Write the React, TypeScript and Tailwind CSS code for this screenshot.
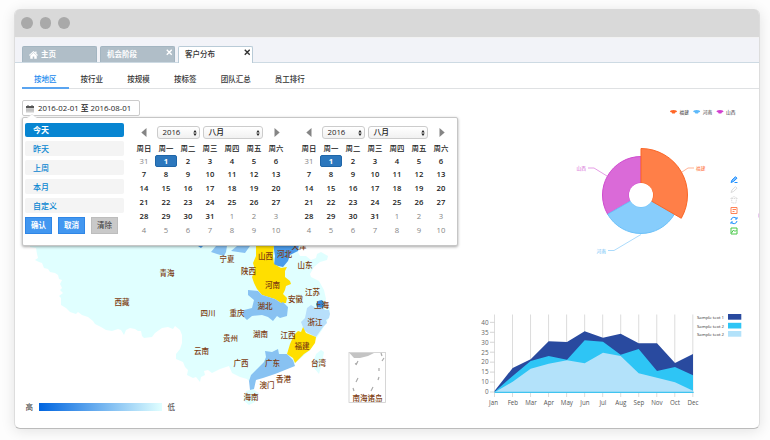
import React from "react";

const weekdays = ["周日", "周一", "周二", "周三", "周四", "周五", "周六"];
const days = [31, ...Array.from({ length: 31 }, (_, i) => i + 1), ...Array.from({ length: 10 }, (_, i) => i + 1)];

function Dots() {
  return (
    <div className="flex h-[29px] shrink-0 items-center gap-[7px] border-b border-[#f2f2f2] bg-[#d9d9d9] pl-[6px]">
      {[0, 1, 2].map((i) => (
        <span key={i} className="size-[11.6px] rounded-full bg-[#a9a9a9]" />
      ))}
    </div>
  );
}

function Cross({ color }: { color: string }) {
  return (
    <svg className="absolute right-[2px] top-[2px] size-[6.500px]" viewBox="0 0 6 6">
      <path d="M.7.7 5.3 5.3M5.3.7.7 5.3" stroke={color} strokeWidth="1.3" />
    </svg>
  );
}

function TabStrip() {
  return (
    <div className="flex h-[25px] shrink-0 items-end gap-[3px] border-b border-[#cddae3] bg-[#f2f3f8] pl-[7px] text-[7.5px] font-medium">
      <div className="flex h-[16px] w-[75px] items-center rounded-t-[2px] border border-b-0 border-[#a3b5c1] bg-[#b0bec8] pl-[6px] pt-px font-bold text-white">
        <svg className="mr-[3px] h-[8px] w-[9px]" viewBox="0 0 18 16" fill="#fff">
          <path d="M9 0 0 8l1.200 1.400L9 2.700l7.800 6.700L18 8l-3-2.700V1h-2.500v2z" />
          <path d="M9 3.400 2.500 9V15.500h5v-4.500h3v4.500h5V9z" />
        </svg>
        主页
      </div>
      <div className="relative flex h-[16px] w-[75px] items-center rounded-t-[2px] border border-b-0 border-[#a3b5c1] bg-[#b0bec8] pl-[6px] pt-px font-bold text-white">
        机会阶段
        <Cross color="#fff" />
      </div>
      <div className="relative -mb-px flex h-[17px] w-[75px] items-center rounded-t-[2px] border border-b-0 border-[#b9cbd7] bg-white pl-[6px] text-[#333]">
        客户分布
        <Cross color="#333" />
      </div>
    </div>
  );
}

function SubNav() {
  return (
    <div className="ml-[7px] flex h-[26px] shrink-0 border-b border-[#dfe1e3] text-[7.5px] font-medium leading-[32px] text-[#333]">
      <span className="h-[26px] border-b-2 border-[#5aa4f0] px-[12px] text-[#2189ee]">按地区</span>
      {["按行业", "按规模", "按标签", "团队汇总", "员工排行"].map((t) => (
        <span key={t} className="px-[12.1px]">{t}</span>
      ))}
    </div>
  );
}

function SelectBox({ label, width }: { label: string; width: string }) {
  return (
    <div className={"flex h-[12.5px] items-center justify-between rounded-[3px] border border-[#ccc] bg-gradient-to-b from-white to-[#f1f1f1] pl-[4.500px] pr-[2px] text-[7.8px] font-medium text-[#222] " + width}>
      {label}
      <svg className="h-[6px] w-[4px]" viewBox="0 0 4 6" fill="#222">
        <path d="M2 0 3.700 2.400H.3zM2 6 .3 3.600h3.400z" />
      </svg>
    </div>
  );
}

function Calendar() {
  return (
    <div className="w-[154px]">
      <div className="flex h-[14px] items-center pt-[1px]">
        <svg className="ml-[8px] mr-[10px] h-[9px] w-[6px] shrink-0" viewBox="0 0 6 9"><path d="M5.500 0v9L.3 4.500z" fill="#858585" /></svg>
        <SelectBox label="2016" width="w-[43px] shrink-0 mr-[3px]" />
        <SelectBox label="八月" width="w-[60px] shrink-0" />
        <svg className="ml-[11px] h-[9px] w-[6px] shrink-0" viewBox="0 0 6 9"><path d="M.5 0v9l5.200-4.500z" fill="#858585" /></svg>
      </div>
      <div className="grid grid-cols-7 pt-[2.500px] text-center text-[7.700px] leading-[13.8px] text-[#222]">
        {weekdays.map((w) => <span key={w} className="h-[13.2px] text-[7.4px] font-medium leading-[13px]">{w}</span>)}
        {days.map((d, i) => (
          <span
            key={i}
            className={
              i === 1
                ? "h-[12.5px] mb-[1.3px] rounded-[2px] bg-[#2c77bd] border border-[#1f66a8] font-bold leading-[11px] text-white"
                : i === 0 || i > 31
                ? "h-[13.8px] text-[#858585] font-normal"
                : "h-[13.8px] font-semibold"
            }
          >
            {d}
          </span>
        ))}
      </div>
    </div>
  );
}

function RangePopup() {
  return (
    <div className="absolute left-[7px] top-[28px] flex h-[129px] w-[436px] rounded-[2px] border border-[#c6c6c6] bg-white shadow-[0_1px_3px_rgba(0,0,0,0.35)]">
      <svg className="absolute left-[4px] top-[-4px] h-[5px] w-[10px]" viewBox="0 0 10 5">
        <path d="M0 4 5 0 10 4v1H0z" fill="#fff" />
        <path d="M0 4 5 .3 10 4" fill="none" stroke="#ddd" strokeWidth=".6" />
      </svg>
      <div className="ml-[2px] w-[99px] shrink-0 pt-[4.500px]">
        <div className="flex flex-col gap-[4.700px] text-[8px] font-medium">
          {["今天", "昨天", "上周", "本月", "自定义"].map((t, i) => (
            <div
              key={t}
              className={
                i === 0
                  ? "flex h-[14.300px] items-center rounded-[2px] bg-[#0785d1] pl-[8px] pt-[1px] font-bold text-white"
                  : "flex h-[14.300px] items-center rounded-[2px] bg-[#f4f4f4] pl-[8px] pt-[1px] text-[#0785d1]"
              }
            >
              {t}
            </div>
          ))}
        </div>
        <div className="flex gap-[6px] pt-[4.500px] text-[7.500px]">
          <span className="flex h-[16.500px] w-[27px] items-center justify-center border border-[#2f86e6] bg-[#4297f0] pt-px font-bold text-white">确认</span>
          <span className="flex h-[16.500px] w-[27px] items-center justify-center border border-[#2f86e6] bg-[#4297f0] pt-px font-bold text-white">取消</span>
          <span className="flex h-[16.500px] w-[27px] items-center justify-center border border-[#bdbdbd] bg-[#c9c9c9] pt-px text-[#333]">清除</span>
        </div>
      </div>
      <div className="flex gap-[11px] pl-[9px] pt-[7px]">
        <Calendar />
        <Calendar />
      </div>
    </div>
  );
}

const labels: [string, number, number][] = [
  ["青海", 167, 273], ["西藏", 122, 302], ["宁夏", 227, 259], ["山西", 265.500, 256], ["河北", 284.500, 254], ["天津", 299, 246],
  ["山东", 305, 265.500], ["陕西", 248.500, 271.500], ["河南", 272.500, 285], ["江苏", 312.500, 292], ["安徽", 295.500, 299.500],
  ["上海", 321.500, 305], ["湖北", 265, 306], ["四川", 208, 313.500], ["重庆", 237, 313.500], ["浙江", 315, 322], ["贵州", 230.500, 338],
  ["湖南", 260.500, 334.500], ["江西", 288, 335.500], ["云南", 201.500, 351.500], ["福建", 302, 346], ["广西", 241, 363],
  ["广东", 272.500, 363.500], ["台湾", 318.500, 363.500], ["香港", 283.500, 379], ["澳门", 267, 385], ["海南", 251, 397],
];

function ChinaMap() {
  return (
    <svg className="block h-[312px] w-[445px] shrink-0" viewBox="15 116 445 312">
      <defs>
        <linearGradient id="heat"><stop offset="0" stopColor="#0065e0" /><stop offset="1" stopColor="#e0ffff" /></linearGradient>
      </defs>
      <path fill="#e0ffff" d="M29 230 30 247 36 248 37 254 38 258 35 260 39 262 42 263 44 268 48 269 50 272 55 273 58 275 59 279 62 280 60 284 62 288 60 290 63 293 59 296 61 298 61 305 66 308 70 312 76 314 78 312 82 315 88 317 93 321 95 324 101 327 106 330 112 331 118 329 121 330 124 335 126 330 130 328 135 329 138 331 141 331 142 336 144 338 152 337 155 333 162 328 168 327 173 329 175 326 180 330 182 335 182 343 180 349 176 354 176 359 183 362 185 367 188 370 187 375 193 378 196 377 200 382 201 377 205 375 204 371 208 370 212 373 220 369 229 366 232 373 240 377 247 379 250 382 257 379 270 373 280 370 293 365 300 359 310 350 316 339 322 330 329 318 330 307 323 305 326 299 324 290 319 281 311 277 310 274 314 267 320 262 327 260 328 256 321 252 317 254 316 258 311 260 306 256 300 256 298 252 302 248V230z" />
      <path fill="#e0ffff" d="M321 350 324 352 322 363 319 374 314 368 314 360 316 354zM246 391 253 389 259 393 255 402 249 405 243 400z" />
      <path fill="#88c2f2" d="M211 252 216 246 227 246 226 252 224 256 217 254zM231 251 237 246 250 246 245 253 238 252z" />
      <path fill="#4a9bea" d="M198 246 203 246 201 248zM273 244 299 244 298 251 290 255 288 261 283 267 274 265 275 256z" />
      <path fill="#ffdf00" d="M256 244 274 244 273 256 274 264 281 268 287 267 285 271 285 277 290 281 291 284 286 286 285 290 283 294 287 298 286 303 281 303 275 299 262 295 257 289 254 283 252 277 255 270 253 263 256 256z" />
      <path fill="#88c2f2" d="M248 290 258 291 262 295 275 299 281 303 283 302 288 307 287 316 280 318 277 316 273 321 268 317 262 315 252 316 247 320 242 315 244 310 252 308 254 300 248 295zM265 351 272 352 278 349 279 354 287 354 293 360 295 366 285 370 275 374 263 378 256 380 254 389 250 390 249 381 251 375 257 369 264 362 266 357z" />
      <path fill="#b7dffb" d="M307 308 311 305 316 308 322 307 325 310 329 310 330 314 329 318 326 320 327 323 323 327 316 337 308 333 304 330 301 322 305 318z" />
      <path fill="#3587dc" d="M318 301 322 300 325 304 323 308 317 307 316 304z" />
      <path fill="#ffdf00" d="M301 332 303 327 306 333 316 337 315 343 310 350 304 354 295 363 293 358 287 354 290 344 294 335 298 331z" />
      <g fill="#7d3c10" fontSize="7.5" textAnchor="middle" className="font-medium">
        {labels.map(([t, x, y]) => <text key={t} x={x} y={y + 2.800}>{t}</text>)}
        <text x="367.500" y="400.500">南海诸岛</text>
      </g>
      <rect x="349" y="352.500" width="36.500" height="50" fill="none" stroke="#ccc" strokeWidth=".8" />
      <path d="M349.500 353H374L368 356 360 358 354 358z" fill="#c4c4c4" />
      <path d="m358 361-2 4m1-2-2 1M358 378l-2 4M353 388l1 3M371 391l2-4M378 380l1-3M379 371v-3M382 361l2-3M381 353l1 3" stroke="#aaa" strokeWidth="1.200" fill="none" />
      <g fill="#333" fontSize="7.5"><text x="25.500" y="410">高</text><text x="167.500" y="410">低</text></g>
      <rect x="39" y="403" width="123" height="8" fill="url(#heat)" />
    </svg>
  );
}

const pieLegend: [string, number, string][] = [["福建", 673.500, "#ff6626"], ["河南", 696.700, "#5db9fa"], ["山西", 720, "#d23fd0"]];

function PieChart() {
  return (
    <svg className="block h-[211px] w-[299px]" viewBox="460 89 299 211">
      {pieLegend.map(([t, x, c]) => (
        <g key={t}>
          <path d={`M${x - 3.500} 112q0-2 2-1.800 1.500-.6 3 0 2-.2 2 1.800l-1.500.3-.7 1.200h-2.600l-.7-1.200z`} fill={c} />
          <text x={x + 6} y="114" fontSize="4.700" fill="#333">{t}</text>
        </g>
      ))}
      <g strokeWidth="1">
        <path d="M641 183V156.500A38.500 38.500 0 0 0 607.660 214.250L630.600 201A12 12 0 0 1 641 183z" fill="#da6ad8" stroke="#d04bcf" />
        <path d="M630.600 201 607.660 214.250A38.500 38.500 0 0 0 674.340 214.250L651.400 201A12 12 0 0 1 630.600 201z" fill="#87cdfc" stroke="#6bc0f8" />
        <path d="M641 183V148.500A46.500 46.500 0 0 1 681.270 218.250L651.400 201A12 12 0 0 0 641 183z" fill="#ff7f48" stroke="#fb6626" />
      </g>
      <circle cx="641" cy="195" r="12" fill="#fff" />
      <g fill="none" strokeWidth=".6">
        <path d="M607 176 594 168h-6" stroke="#d45bd3" />
        <path d="m682 172 6-4h6" stroke="#ff7f50" />
        <path d="M641 234.500 614 250.500h-6" stroke="#74c3f8" />
      </g>
      <g fontSize="4.700">
        <text x="576.500" y="170" fill="#d45bd3">山西</text>
        <text x="696" y="170" fill="#ff6a2d">福建</text>
        <text x="596.500" y="252.500" fill="#68bdf6">河南</text>
      </g>
      <g fill="none" strokeWidth="1">
        <path d="m731 182.500 1-2.500 3.500-3.300 1.500 1.500-3.500 3.300zM734.500 182.500h3" stroke="#1e90ff" fill="#7fbfff" />
        <path d="m731 192.500 1-2.500 3.500-3.300 1.500 1.500-3.500 3.300z" stroke="#d2d2d2" strokeWidth=".8" />
        <path d="M731.500 198.500h5l-.5 4.500h-4zM730.500 198.500l3.500-2 3.500 2" stroke="#d2d2d2" strokeWidth=".8" strokeDasharray="1.500 .7" />
        <path d="M731 207.500h6v6h-6zM732.500 209.500h3.500M732.500 211.500h2" stroke="#ff8357" />
        <path d="M731 220a3.100 3.100 0 0 1 5.500-1.500M737 221a3.100 3.100 0 0 1-5.500 1.500M737 217v2h-2M731 224v-2h2" stroke="#1e90ff" />
        <path d="M731 228h6v6h-6zM731.500 233l2-3 1.500 1.500 1.500-1.500" stroke="#46c846" />
      </g>
      <path d="M758.500 213.500v4" stroke="#e3b0e9" strokeWidth=".7" />
    </svg>
  );
}

const months = ["Jan", "Feb", "Mar", "Apr", "May", "Jun", "Jul", "Aug", "Sep", "Nov", "Oct", "Dec"];
const ticks = [0, 10, 15, 20, 25, 30, 35, 40];
const samples: [string, number, string][] = [["Sample text 1", 317, "#294a9f"], ["Sample text 2", 325.800, "#2ec5f5"], ["Sample text 2", 334, "#b3e2fa"]];

function AreaChart() {
  return (
    <svg className="block h-[128px] w-[299px]" viewBox="460 300 299 128">
      {months.map((m, i) => <path key={m} d={`M${494.500 + i * 18.030} 314.500V397`} stroke="#dcdcdc" strokeWidth="1" />)}
      {ticks.map((v, i) => (
        <g key={v}>
          <path d={`M490 ${392 - i * 9.950}h4.500`} stroke="#ccc" strokeWidth=".8" />
          <text x="488.500" y={394.300 - i * 9.950} textAnchor="end" fontSize="6.300" fill="#666">{v}</text>
        </g>
      ))}
      <g transform="translate(470 300) scale(.333333)">
        <path fill="#294a9f" d="M74 272 128 204 182 178 236 124 291 126 344 94 399 113 452 101 506 130 561 130 615 189 669 162V277H74z" />
        <path fill="#2ec5f5" d="M74 275 128 228 182 183 236 168 291 179 344 121 399 125 452 164 506 147 561 213 615 201 669 226V277H74z" />
        <path fill="#b3e2fa" d="M74 277 128 245 182 206 236 191 291 181 344 190 399 158 452 168 506 220 561 233 615 247 669 272V277z" />
        <path d="M74 277H671" stroke="#3fc4f0" strokeWidth="4" />
      </g>
      {months.map((m, i) => (
        <text key={m} x={(i === 0 ? 493.500 : 494.900) + i * 18} y="405" textAnchor="middle" fontSize="6.200" fill="#555">{m}</text>
      ))}
      {samples.map(([t, y, c], i) => (
        <g key={i}>
          <text x="697" y={y + 1.700} fontSize="4.300" textLength="27" fill="#333">{t}</text>
          <rect x="728" y={y - 3} width="13.300" height="5.700" fill={c} />
        </g>
      ))}
    </svg>
  );
}

export default function App() {
  return (
    <div className="h-[440px] w-[770px] overflow-hidden bg-[#fdfdfd] pl-[14px] pt-[9px] font-['Open_Sans','Noto_Sans_CJK_SC',sans-serif]">
      <div className="flex h-[420px] w-[746px] flex-col overflow-hidden rounded-[6px] border border-t-0 border-[#ddd] border-b-[#bbb] bg-white shadow-[0_2px_14px_rgba(0,0,0,0.11)]">
        <Dots />
        <TabStrip />
        <SubNav />
        <div className="relative flex min-h-0 flex-1">
          <div className="w-[445px] shrink-0">
            <div className="ml-[7px] mt-[11px] flex h-[16px] w-[118px] items-center rounded-[2px] border border-[#ccc] bg-white pl-[3px] pt-px text-[7.800px] font-medium text-[#222]">
              <svg className="mr-[4px] size-[8px]" viewBox="0 0 8 8">
                <path d="M0 1h8v6.500H0z" fill="#ccc" /><path d="M0 1h8v2H0zM1.500 0h1v1h-1zM5.500 0h1v1h-1z" fill="#555" />
                <path d="M0 5h8" stroke="#aaa" strokeWidth=".6" />
              </svg>
              <span className="whitespace-nowrap">2016-02-01 至 2016-08-01</span>
            </div>
            <ChinaMap />
          </div>
          <div className="flex w-[299px] shrink-0 flex-col">
            <PieChart />
            <AreaChart />
          </div>
          <RangePopup />
        </div>
      </div>
    </div>
  );
}
